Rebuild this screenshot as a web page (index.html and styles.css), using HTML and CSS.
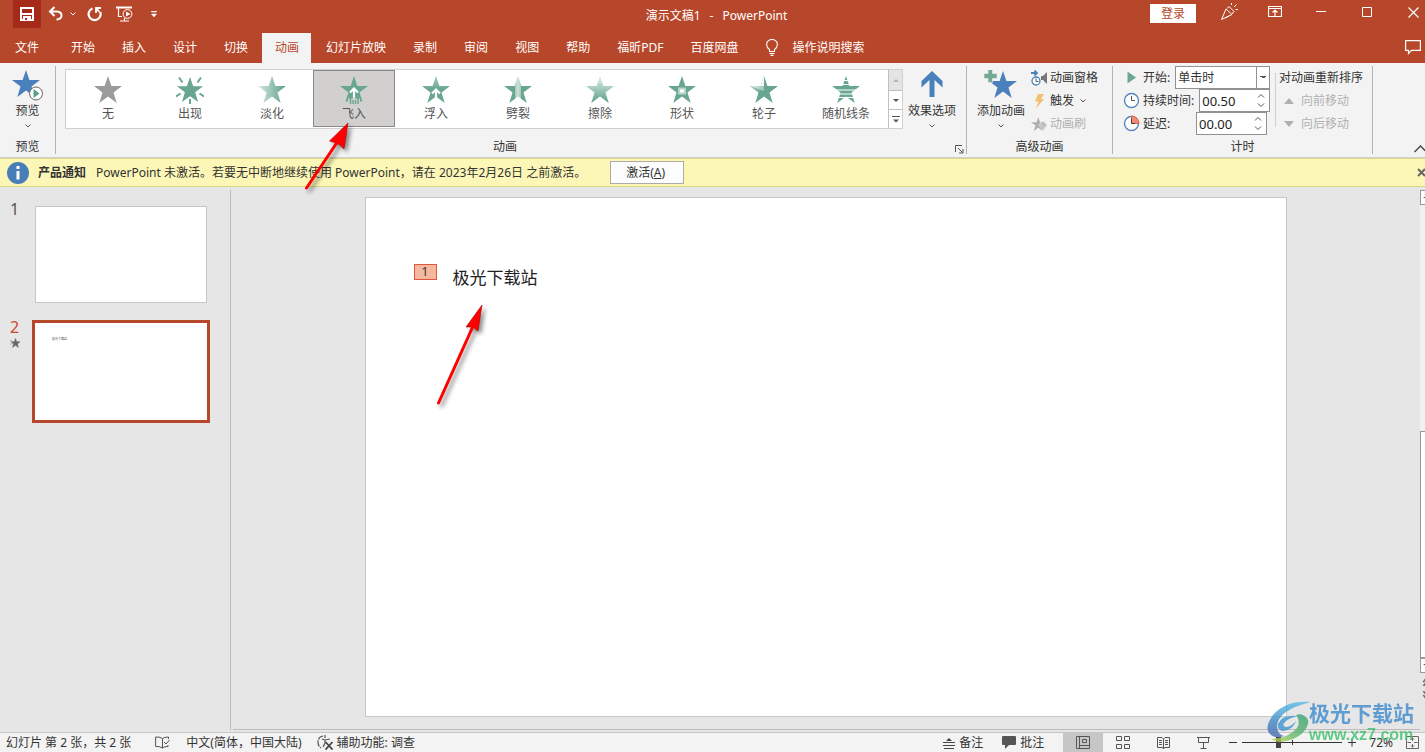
FILE: index.html
```html
<!DOCTYPE html>
<html lang="zh-CN">
<head>
<meta charset="utf-8">
<title>演示文稿1 - PowerPoint</title>
<link rel="stylesheet" href="styles.css">
</head>
<body>
<svg class="defs" width="0" height="0" aria-hidden="true">
  <defs>
    <path id="star" d="M14 0L17.4 10H28L19.5 16.5L22.7 27L14 20.6L5.3 27L8.5 16.5L0 10H10.6Z"/>
    <linearGradient id="fade-right"><stop offset="0" stop-color="#d5e8e0"/><stop offset="1" stop-color="#5c9f87"/></linearGradient>
    <linearGradient id="fade-down" x2="0" y2="1"><stop offset="0" stop-color="#e2f0ea"/><stop offset="1" stop-color="#5c9f87"/></linearGradient>
    <linearGradient id="float" x2="0" y2="1"><stop offset="0" stop-color="#a5cbbc"/><stop offset=".5" stop-color="#68a690"/></linearGradient>
    <linearGradient id="split"><stop offset=".38" stop-color="#68a690"/><stop offset=".38" stop-color="#9cc6b6"/><stop offset=".5" stop-color="#cbe2d9"/><stop offset=".62" stop-color="#9cc6b6"/><stop offset=".62" stop-color="#68a690"/></linearGradient>
    <linearGradient id="swirl-blue" x2="0" y2="1"><stop offset="0" stop-color="#54bdea"/><stop offset=".55" stop-color="#4189c6"/><stop offset="1" stop-color="#4a68b0"/></linearGradient>
    <linearGradient id="swirl-green" x1="1" y1="0" x2="0" y2="1"><stop offset="0" stop-color="#2f9f76"/><stop offset=".6" stop-color="#69b96b"/><stop offset="1" stop-color="#d6dc4e"/></linearGradient>
  </defs>
</svg>

<div class="app">
  <header class="header">
    <div class="titlebar">
      <div class="quick">
        <button class="save" aria-label="保存"><svg width="14" height="14" viewBox="0 0 14 14"><path fill="#fff" fill-rule="evenodd" d="M0 0H14V14H0ZM2 2V6H12V2ZM2 8V12H3V9H11V12H12V8ZM5 11V13H7V11Z"/></svg></button>
        <button class="undo" aria-label="撤消"><svg width="16" height="16" viewBox="0 0 16 16"><path d="M6.500 1L2 5.500L6.500 10M2 5.500H9Q13.500 6 13.500 9.500Q13.500 13 8.500 13.500" fill="none" stroke="#fff" stroke-width="2"/></svg></button>
        <button class="undo-more" aria-label="撤消列表"><svg width="6" height="4" viewBox="0 0 6 4"><path d="M.5 .5L3 3L5.500 .5" fill="none" stroke="#fff"/></svg></button>
        <button class="redo" aria-label="重复"><svg width="16" height="16" viewBox="0 0 16 16"><path d="M5.500 2.500A6 6 0 1 0 13.200 6" fill="none" stroke="#fff" stroke-width="2.200"/><path d="M9 7V2H14M9.500 2.500L12.500 6" fill="none" stroke="#fff" stroke-width="1.800"/></svg></button>
        <button class="play" aria-label="从头开始"><svg width="18" height="16" viewBox="0 0 18 16"><g fill="none" stroke="#fff"><path d="M0 1.500H16" stroke-width="2"/><path d="M2.500 2V10.500H6M4 15H13M8.500 12V15" stroke-width="1.200"/><circle cx="11.500" cy="8" r="4.400"/></g><path d="M10 5.500L14.500 8L10 10.500Z" fill="#fff"/></svg></button>
        <button class="quick-more" aria-label="自定义快速访问工具栏"><svg width="6" height="7" viewBox="0 0 6 7"><path d="M.5 0H5.500V1H.5ZM.5 3H5.500L3 6Z" fill="#fff" stroke="#fff" stroke-width=".5"/></svg></button>
      </div>
      <h1 class="title"><span>演示文稿1</span><span>-</span><span>PowerPoint</span></h1>
      <div class="window">
        <button class="signin">登录</button>
        <button class="cell" aria-label="即将推出的功能"><svg width="18" height="18" viewBox="0 0 18 18"><g fill="none" stroke="#fff"><path d="M1.500 16.500L6 6L12 11.500L1.500 16.500M7 5.500L9 3.500L14 8.500L12 11M9 13L5 15M11.500 2V0M14 4L16.500 1.500M15.500 6.500H18"/></g></svg></button>
        <button class="cell" aria-label="功能区显示选项"><svg width="14" height="12" viewBox="0 0 14 12"><path d="M.5 .5H13.500V10.500H.5ZM.5 2.500H13.500M7 10V5M4.500 6.500L7 4L9.500 6.500" fill="none" stroke="#fff" stroke-width="1.200"/></svg></button>
        <button class="cell" aria-label="最小化"><svg width="10" height="12"><path d="M0 5.500H10" stroke="#fff"/></svg></button>
        <button class="cell" aria-label="最大化"><svg width="10" height="10"><path d="M.5 .5H9.500V9.500H.5Z" fill="none" stroke="#fff"/></svg></button>
        <button class="cell" aria-label="关闭"><svg width="11" height="11"><path d="M.5 .5L10.500 10.500M10.500 .5L.5 10.500" stroke="#fff" stroke-width="1.200"/></svg></button>
      </div>
    </div>
    <nav class="tabs">
      <button class="tab file">文件</button>
      <button class="tab">开始</button>
      <button class="tab">插入</button>
      <button class="tab">设计</button>
      <button class="tab">切换</button>
      <button class="tab active">动画</button>
      <button class="tab">幻灯片放映</button>
      <button class="tab">录制</button>
      <button class="tab">审阅</button>
      <button class="tab">视图</button>
      <button class="tab">帮助</button>
      <button class="tab">福昕PDF</button>
      <button class="tab">百度网盘</button>
      <button class="tell"><svg width="12" height="17" viewBox="0 0 12 17"><path d="M3.500 12.500V10.500Q.6 8.500 .6 5.500A5.400 5 0 0 1 11.400 5.500Q11.400 8.500 8.500 10.500V12.500ZM3.500 14.500H8.500M4.500 16.400H7.500" fill="none" stroke="#fff" stroke-width="1.100"/></svg>操作说明搜索</button>
      <button class="comment" aria-label="批注"><svg width="16" height="15" viewBox="0 0 16 15"><path d="M.6 .6H15.400V10.400H6.500L3.500 13.500V10.400H.6Z" fill="none" stroke="#fff" stroke-width="1.200"/></svg></button>
    </nav>
  </header>

  <section class="ribbon" aria-label="动画">
    <div class="group preview">
      <div class="body">
        <button class="big"><svg width="32" height="32" viewBox="0 0 32 32"><use href="#star" fill="#4a80bc"/><circle cx="24" cy="23.500" r="6.500" fill="#fff" stroke="#666"/><path d="M21.500 19L27.500 23.500L21.500 28Z" fill="#5aa184"/></svg><span>预览</span><svg class="chev" width="6" height="4" viewBox="0 0 6 4"><path d="M.5 .5L3 3L5.500 .5" fill="none" stroke="#555"/></svg></button>
      </div>
      <div class="caption"><span>预览</span></div>
    </div>

    <div class="group animation">
      <div class="body">
        <div class="gallery">
          <button class="item"><svg width="28" height="28"><use href="#star" fill="#9b9b9b"/></svg>无</button>
          <button class="item"><svg width="28" height="28"><use href="#star" fill="#68a690" transform="translate(1 1) scale(.93)"/><g fill="none" stroke="#68a690" stroke-width="2"><path d="M3 1.500L6.500 6.500M25 1.500L21.500 6.500M0 20.500L4.500 17.500M28 20.500L23.500 17.500M14 23V28"/></g></svg>出现</button>
          <button class="item"><svg width="28" height="28"><use href="#star" fill="url(#fade-right)"/></svg>淡化</button>
          <button class="item selected"><svg width="28" height="28"><path d="M14 0L17.400 10H28L19.500 16.500L22 24H6L8.500 16.500L0 10H10.600Z" fill="#68a690"/><path d="M14 22.500V12.500M10 16.500L14 12.500L18 16.500" fill="none" stroke="#fff" stroke-width="2.200"/><path d="M5 22.500H12.500L14 21L15.500 22.500H23V25H5Z" fill="#d1d0ce"/><path d="M7 21.500L5.500 25.500H8V22M21 21.500L22.500 25.500H20V22" fill="#68a690"/><path d="M10.500 21V28M13 24V28M15.500 24V28M18 21V28" stroke="#68a690" stroke-width="1.400"/></svg>飞入</button>
          <button class="item"><svg width="28" height="28"><use href="#star" fill="url(#float)"/><path d="M14 21V13.500M10 17.500L14 13.500L18 17.500" fill="none" stroke="#fff" stroke-width="2.200"/></svg>浮入</button>
          <button class="item"><svg width="28" height="28"><use href="#star" fill="url(#split)"/></svg>劈裂</button>
          <button class="item"><svg width="28" height="28"><use href="#star" fill="url(#fade-down)"/></svg>擦除</button>
          <button class="item"><svg width="28" height="28"><use href="#star" fill="#68a690"/><path d="M11 12.500H17V17.500H11Z" fill="#fff" stroke="#b6d6ca" stroke-width="2"/></svg>形状</button>
          <button class="item"><svg width="28" height="28"><use href="#star" fill="#68a690"/><path d="M14 0V15L0 10H10.600Z" fill="#fff"/><path d="M14 15V10H0L7 15.500Z" fill="url(#fade-right)" opacity=".6"/></svg>轮子</button>
          <button class="item"><svg width="28" height="28"><use href="#star" fill="#68a690"/><path d="M0 4.500H28M0 8.500H28M0 14H28M0 18H28M0 21.500H28" stroke="#fff" stroke-width="1.200"/></svg>随机线条</button>
          <div class="pager">
            <button aria-label="上一行" disabled><svg width="6" height="3"><path d="M0 3L3 0L6 3Z" fill="#b5b5b5"/></svg></button>
            <button aria-label="下一行"><svg width="6" height="3"><path d="M0 0H6L3 3Z" fill="#555"/></svg></button>
            <button aria-label="其他"><svg width="8" height="7"><path d="M0 .5H8" stroke="#555"/><path d="M1 3.500H7L4 6.500Z" fill="#555"/></svg></button>
          </div>
        </div>
        <button class="big effect"><svg width="24" height="32" viewBox="0 0 24 32"><path d="M12 1L22.500 11V17.500L14.500 10V27H9.500V10L1.500 17.500V11Z" fill="#4a80bc"/></svg><span>效果选项</span><svg class="chev" width="6" height="4" viewBox="0 0 6 4"><path d="M.5 .5L3 3L5.500 .5" fill="none" stroke="#555"/></svg></button>
      </div>
      <div class="caption"><span>动画</span><button class="launcher" aria-label="动画选项"><svg width="9" height="9" viewBox="0 0 9 9"><path d="M.5 7V.5H7M3 3L7.500 7.500M8 4V8H4" fill="none" stroke="#555"/></svg></button></div>
    </div>

    <div class="group advanced">
      <div class="body">
        <button class="big"><svg width="34" height="32" viewBox="0 0 34 32"><use href="#star" fill="#4a80bc" transform="translate(5 1)"/><path d="M4 -.5H8.500V3.500H13V8.500H8.500V12.500H4V8.500H0V3.500H4Z" fill="#72aa94" stroke="#f3f3f3" stroke-width=".6"/></svg><span>添加动画</span><svg class="chev" width="6" height="4" viewBox="0 0 6 4"><path d="M.5 .5L3 3L5.500 .5" fill="none" stroke="#555"/></svg></button>
        <div class="rows">
          <button class="row"><svg width="17" height="16" viewBox="0 0 17 16"><path d="M0 3H6M3.500 .5L6 3L3.500 5.500" fill="none" stroke="#4a80bc" stroke-width="1.800"/><circle cx="5" cy="11" r="4" fill="#fff" stroke="#4a80bc" stroke-width="1.300"/><path d="M5 8.500V11.500H7.500" fill="none" stroke="#555"/><path d="M10 6H12L16 2V14L12 10H10Z" fill="#777"/></svg>动画窗格</button>
          <button class="row"><svg width="17" height="16" viewBox="0 0 17 16"><path d="M7 1H13L10 6H13L5 15.500L7.500 8.500H4Z" fill="#f0c071"/></svg>触发<svg class="more" width="6" height="4" viewBox="0 0 6 4"><path d="M.5 .5L3 3L5.500 .5" fill="none" stroke="#555"/></svg></button>
          <button class="row" disabled><svg width="17" height="16" viewBox="0 0 17 16"><use href="#star" fill="#b0b0b0" transform="translate(0 1) scale(.52)"/><path d="M8 9L12 5L16 9L12 14.500ZM9 8L14 12" fill="#bbb" stroke="#e6e6e6" stroke-width=".7"/></svg>动画刷</button>
        </div>
      </div>
      <div class="caption"><span>高级动画</span></div>
    </div>

    <div class="group timing">
      <div class="body">
        <div class="fields">
          <div class="field"><svg width="17" height="17" viewBox="0 0 17 17"><path d="M4.500 2.500L13 8.500L4.500 14.500Z" fill="#6ca790"/></svg><label for="start">开始:</label><select id="start"><option>单击时</option><option>与上一动画同时</option></select></div>
          <div class="field"><svg width="17" height="17" viewBox="0 0 17 17"><circle cx="8.500" cy="8.500" r="7" fill="#fff" stroke="#5285bd" stroke-width="1.400"/><path d="M8.500 4V8.500H12" fill="none" stroke="#555"/></svg><label for="duration">持续时间:</label><span class="spin"><input id="duration" type="text" value="00.50"><span class="arrows"><button aria-label="增加持续时间"><svg width="8" height="5"><path d="M1 4.500L4 1.500L7 4.500" fill="none" stroke="#555"/></svg></button><button aria-label="减少持续时间"><svg width="8" height="5"><path d="M1 .5L4 3.500L7 .5" fill="none" stroke="#555"/></svg></button></span></span></div>
          <div class="field"><svg width="17" height="17" viewBox="0 0 17 17"><circle cx="8.500" cy="8.500" r="7" fill="#fff" stroke="#5285bd" stroke-width="1.400"/><path d="M8.500 8.500V1A7.500 7.500 0 0 1 16 8.500Z" fill="#ee8b71" stroke="#e0644a"/><path d="M8.500 3.500V8.500H12" fill="none" stroke="#444"/></svg><label class="wide" for="delay">延迟:</label><span class="spin"><input id="delay" type="text" value="00.00"><span class="arrows"><button aria-label="增加延迟"><svg width="8" height="5"><path d="M1 4.500L4 1.500L7 4.500" fill="none" stroke="#555"/></svg></button><button aria-label="减少延迟"><svg width="8" height="5"><path d="M1 .5L4 3.500L7 .5" fill="none" stroke="#555"/></svg></button></span></span></div>
        </div>
        <div class="reorder">
          <div class="row">对动画重新排序</div>
          <button class="row" disabled><svg width="10" height="6"><path d="M0 6L5 0L10 6Z" fill="#b0b0b0"/></svg>向前移动</button>
          <button class="row" disabled><svg width="10" height="6"><path d="M0 0H10L5 6Z" fill="#b0b0b0"/></svg>向后移动</button>
        </div>
      </div>
      <div class="caption"><span>计时</span></div>
    </div>
    <button class="collapse" aria-label="折叠功能区"><svg width="13" height="8"><path d="M.5 7L6.500 1L12.500 7" fill="none" stroke="#444" stroke-width="1.300"/></svg></button>
  </section>

  <div class="notice">
    <svg width="22" height="22" viewBox="0 0 22 22"><circle cx="11" cy="11" r="11" fill="#477eb8"/><path d="M11 4V7M11 9V17.500" stroke="#fff" stroke-width="3"/></svg>
    <strong>产品通知</strong>
    <p>PowerPoint 未激活。若要无中断地继续使用 PowerPoint，请在 2023年2月26日 之前激活。</p>
    <button class="activate">激活(<u>A</u>)</button>
    <button class="dismiss" aria-label="关闭通知"><svg width="9" height="9"><path d="M1 1L8 8M8 1L1 8" stroke="#666" stroke-width="2"/></svg></button>
  </div>

  <main class="work">
    <aside class="thumbs">
      <div class="thumb-row"><div class="index">1</div><div class="thumb"></div></div>
      <div class="thumb-row"><div class="index current">2<svg width="10" height="10" viewBox="0 0 10 10"><path d="M5.500 .5L6.700 3.800H10L7.400 5.900L8.400 9.500L5.500 7.300L2.600 9.500L3.600 5.900L1 3.800H4.300ZM0 2.500H1.500M0 6H1.500" fill="#666" stroke="#666" stroke-width=".5"/></svg></div><div class="thumb chosen"><span>极光下载站</span></div></div>
    </aside>
    <div class="canvas">
      <div class="slide">
        <span class="order">1</span>
        <p class="text">极光下载站</p>
      </div>
    </div>
    <div class="scroll">
      <button class="scroll-up" aria-label="向上滚动"><svg width="5" height="3"><path d="M2 2L5 0V2Z" fill="#444"/></svg></button>
      <div class="scroll-thumb"></div>
      <button class="scroll-down" aria-label="向下滚动"><svg width="5" height="3"><path d="M2 0H5V2Z" fill="#444"/></svg></button>
      <button class="page" aria-label="上一张幻灯片"><svg width="5" height="8"><path d="M3 4L5 1V3L4 4ZM3 8L5 5V8Z" fill="#777" stroke="#777"/></svg></button>
      <button class="page" aria-label="下一张幻灯片"><svg width="5" height="8"><path d="M3 0L5 3V1ZM3 4L5 7V5Z" fill="#777" stroke="#777"/></svg></button>
    </div>
  </main>

  <footer class="status">
    <span class="count">幻灯片 第 2 张，共 2 张</span>
    <button class="proof" aria-label="校对"><svg width="15" height="13" viewBox="0 0 15 13"><path d="M7.500 2.500V12M7.500 2.500Q4 .5 .6 1V10.500Q4 10 7.500 12Q9 10.500 13 10.500V9M7.500 2.500Q9 1 13.500 1V3M9 6L11 8L14.500 4" fill="none" stroke="#555"/></svg></button>
    <button class="lang">中文(简体，中国大陆)</button>
    <button class="access"><svg width="17" height="15" viewBox="0 0 17 15"><path d="M6 1Q1 2 1 7Q1 11 4 13" fill="none" stroke="#555" stroke-width="1.200" stroke-dasharray="6 1"/><path d="M8 0V3M5 4L8 5L13 4M8 5V8L6 12" fill="none" stroke="#555" stroke-width="1.200"/><path d="M8.500 7L15.500 14.500M15.500 7L8.500 14.500" stroke="#444" stroke-width="1.800"/></svg>辅助功能: 调查</button>
    <div class="tools">
      <button class="notes"><svg width="12" height="12" viewBox="0 0 12 12"><path d="M3 4H9L6 1Z" fill="#444"/><path d="M0 5.500H12M0 8.500H12M1 11.500H11" stroke="#444"/></svg>备注</button>
      <button class="notes"><svg width="14" height="13" viewBox="0 0 14 13"><path d="M1 0H13Q14 0 14 1V8Q14 9 13 9H7L3 13V9H1Q0 9 0 8V1Q0 0 1 0Z" fill="#555"/></svg>批注</button>
      <div class="views">
        <button class="on" aria-label="普通视图"><svg width="14" height="13"><path d="M.5 .5H13.500V12.500H.5ZM3.500 .5V12.500M3.500 9.500H13.500M6.500 3.500H10.500V6.500H6.500Z" fill="none" stroke="#555"/></svg></button>
        <button aria-label="幻灯片浏览"><svg width="14" height="13"><path d="M.5 .5H5.500V4.500H.5ZM8.500 .5H13.500V4.500H8.500ZM.5 8.500H5.500V12.500H.5ZM8.500 8.500H13.500V12.500H8.500Z" fill="none" stroke="#555"/></svg></button>
        <button aria-label="阅读视图"><svg width="13" height="12"><path d="M6.500 2V12M.5 .5H5L6.500 2L8 .5H12.500V10.500H8L6.500 11.500L5 10.500H.5ZM2 3.500H5M2 5.500H5M2 7.500H5M8 3.500H11M8 5.500H11M8 7.500H11" fill="none" stroke="#555"/></svg></button>
        <button aria-label="幻灯片放映"><svg width="13" height="12"><path d="M0 .5H13M1.500 .5V5.500H11.500V.5M6.500 5.500V11M3.500 11.500H9.500" fill="none" stroke="#555"/></svg></button>
      </div>
      <button class="zoom-step" aria-label="缩小"><svg width="8" height="9"><path d="M0 4.500H8" stroke="#333"/></svg></button>
      <input class="zoom" type="range" min="10" max="190" value="73" aria-label="缩放">
      <button class="zoom-step" aria-label="放大"><svg width="8" height="9"><path d="M0 4.500H8M4 .5V8.500" stroke="#333"/></svg></button>
      <button class="percent">72%</button>
      <button class="fit" aria-label="按窗口大小调整"><svg width="13" height="13"><path d="M.5 .5H12.500V12.500H.5ZM6.500 1.500V5M6.500 8V11.500M1.500 6.500H5M8 6.500H11.500M5 3.500L6.500 2L8 3.500M5 9.500L6.500 11L8 9.500" fill="none" stroke="#666"/></svg></button>
    </div>
  </footer>

  <svg class="pointer to-gallery" width="62" height="86" viewBox="0 0 62 86" aria-hidden="true"><path d="M38 26L31.500 24L50 6L46 32L42 28Z" fill="#f00" stroke="#a00" stroke-width=".6"/><path d="M8.500 71L40 24" stroke="#f00" stroke-width="3" stroke-linecap="round"/></svg>
  <svg class="pointer to-text" width="66" height="116" viewBox="0 0 66 116" aria-hidden="true"><path d="M36 28L52 6L48 32L43 28Z" fill="#f00" stroke="#a00" stroke-width=".6"/><path d="M8.500 104L44 25" stroke="#f00" stroke-width="3" stroke-linecap="round"/></svg>

  <div class="mark">
    <svg width="46" height="42" viewBox="0 0 46 42" aria-hidden="true"><path d="M44 1Q19 -1 6 14Q-4 28 4 34Q9 38 17 35Q10 33 10 25Q11 9 44 1Z" fill="url(#swirl-blue)"/><path d="M33 13Q43 16 41 23Q36 38 14 41Q8 41 4 38Q22 37 30 27Q34 20 29 14Z" fill="url(#swirl-green)"/><path d="M31 15Q15 13 11 23Q10 29 16 30Q26 29 29 20Q25 25 20 26Q15 26 17 22Q21 17 31 15Z" fill="#3d95d2"/></svg>
    <div class="mark-text"><b>极光下载站</b><span>www.xz7.com</span></div>
  </div>
</div>
</body>
</html>
```
FILE: styles.css
```css
* { box-sizing: border-box; }

body {
  margin: 0;
  color: #333;
  font: 12px/18px "Noto Sans", "Noto Sans CJK SC", sans-serif;
}

button, input, select {
  margin: 0;
  padding: 0;
  border: 0;
  border-radius: 0;
  background: none;
  color: inherit;
  font: inherit;
  white-space: nowrap;
}

svg { display: block; flex: none; }
.defs { position: absolute; }

.app {
  position: relative;
  display: flex;
  flex-direction: column;
  height: 100vh;
  overflow: hidden;
  background: #e6e6e6;
}

/* Title bar and tabs */
.header { background: #b7472a; color: #fff; overflow: hidden; }
.titlebar { display: grid; grid-template-columns: 1fr auto 1fr; height: 33px; }
.quick { display: flex; align-items: center; height: 28px; padding-left: 13px; }
.save { display: grid; place-items: center; width: 28px; height: 28px; background: #a52a1a; }
.undo { margin-left: 7px; }
.undo-more { margin-left: 6px; }
.redo { margin-left: 11px; }
.play { margin-left: 13px; }
.quick-more { margin-left: 17px; }
.title { display: flex; gap: 9px; margin: 0; padding: 7px 0 0 8px; font: inherit; }
.window { display: flex; justify-content: flex-end; height: 24px; margin-right: -11px; }
.signin { width: 46px; height: 19px; margin: 4px 10px 0 0; background: #fff; color: #b7472a; }
.cell { display: grid; place-items: center; width: 46px; }

.tabs { display: flex; align-items: stretch; height: 30px; gap: 2px; }
.tab { padding: 0 12px 0 13px; }
.tab.file { width: 54px; padding: 0; margin-right: 2px; }
.tab.active { background: #f3f3f3; color: #b7472a; }
.tell { display: flex; align-items: center; gap: 14px; margin-left: 14px; padding-bottom: 1px; }
.comment { margin: 0 4px 1px auto; }

/* Ribbon */
.ribbon {
  position: relative;
  display: flex;
  flex: none;
  height: 95px;
  padding: 3px 0;
  border-bottom: 1px solid #d2d0ce;
  background: #f3f3f3;
  overflow: hidden;
}
.group { display: flex; flex-direction: column; justify-content: space-between; border-right: 1px solid #b5b5b5; }
.body { display: flex; align-items: flex-start; }
.caption { display: flex; align-items: center; height: 14px; text-align: center; }
.caption span { flex: 1; }
.big { display: flex; flex-direction: column; align-items: center; padding-top: 4px; }
.chev { margin-top: 4px; }
.preview .body { justify-content: center; }
.preview { width: 56px; }
.animation { padding-left: 9px; }
.animation .caption { padding-right: 2px; }
.animation .caption span { padding-right: 10px; }
.gallery { display: flex; height: 60px; margin-top: 3px; padding-left: 1px; border: 1px solid #d0d0d0; background: #fff; }
.item { display: flex; flex-direction: column; align-items: center; width: 82px; height: 57px; padding-top: 5px; border: 1px solid transparent; color: #555; }
.item.selected { border-color: #8a8886; background: #d1d0ce; }
.item svg { margin-bottom: 1px; }
.pager { display: grid; grid-template-rows: 20px 1fr 1fr; width: 14px; margin-left: 1px; border-left: 1px solid #c0c0c0; }
.pager button { display: grid; place-items: center; }
.pager button + button { border-top: 1px solid #c0c0c0; }
.pager button:disabled { background: #e4e4e4; }
.effect { margin: 0 10px 0 5px; }
.launcher { width: 9px; margin-top: 4px; }

.advanced { width: 146px; }
.advanced .body { gap: 6px; padding-left: 10px; }
.row { display: flex; align-items: center; gap: 2px; height: 23px; }
.row:disabled { color: #b1b1b1; }
.more { margin-left: 4px; }

.timing { width: 260px; }
.fields { padding-left: 10px; }
.field { display: flex; align-items: center; height: 23px; }
.field label { margin: 0 5px 0 3px; }
.field .wide { width: 48px; }
.field select {
  width: 95px;
  height: 23px;
  padding: 0 2px;
  border: 1px solid #919191;
  appearance: none;
  background:
    linear-gradient(#919191, #919191) right 12px top 0 / 1px 100% no-repeat,
    conic-gradient(from -45deg at 50% 100%, transparent 0) right 3px center / 6px 3px no-repeat,
    linear-gradient(to bottom left, #555 50%, transparent 50%) right 6px center / 3px 3px no-repeat,
    linear-gradient(to bottom right, #555 50%, transparent 50%) right 3px center / 3px 3px no-repeat,
    #fff;
}
.spin { display: flex; width: 71px; height: 23px; border: 1px solid #919191; background: #fff; }
.spin input { flex: 1; min-width: 0; padding-left: 2px; color: #222; font-size: 13px; }
.arrows { display: grid; width: 16px; }
.arrows button { display: grid; place-items: center; }
.reorder { display: flex; flex-direction: column; margin-left: auto; padding: 0 9px 0 4px; background: linear-gradient(#d0d0d0, #d0d0d0) left 7px / 1px 54px no-repeat; }
.reorder .row + .row { gap: 7px; padding-left: 5px; }
.collapse { position: absolute; right: -2px; bottom: 4px; }

/* Activation notice */
.notice {
  display: flex;
  flex: none;
  align-items: center;
  height: 29px;
  padding-left: 7px;
  border: solid #d9d58a;
  border-width: 1px 0;
  background: #fcf7b6;
  overflow: hidden;
}
.notice strong { margin: 0 10px 0 9px; }
.notice p { margin: 0; white-space: nowrap; }
.activate { width: 74px; height: 23px; margin-left: 24px; padding-right: 3px; border: 1px solid #ababab; background: #fdfdfd; }
.dismiss { margin: 0 -1px 0 auto; }

/* Workspace */
.work { display: flex; flex: 1; min-height: 0; padding: 3px 0 2px; }
.thumbs { width: 231px; flex: none; padding-top: 16px; border-right: 1px solid #bcbcbc; }
.thumb-row { display: flex; align-items: flex-start; }
.index { width: 25px; margin-right: 7px; padding-left: 10px; color: #555; font-size: 16px; line-height: 14px; }
.thumb-row:first-child .index { margin-top: -4px; }
.index svg { margin-top: 4px; }
.index.current { color: #d24726; }
.thumb { width: 178px; aspect-ratio: 178 / 103; margin-bottom: 14px; border: 1px solid #c6c6c6; background: #fff; }
.thumb-row:first-child .thumb { width: 172px; aspect-ratio: 172 / 97; margin: 0 3px 17px; }
.thumb.chosen { padding: 12px 17px; border: 3px solid #b7472a; color: #555; font-size: 3px; line-height: 9px; }
.thumb span { display: block; }
.canvas {
  display: flex;
  flex: 1;
  justify-content: center;
  min-width: 0;
  margin-left: 2px;
  padding: 7px 2px 12px 0;
  border-bottom: 1px solid #bcbcbc;
}
.slide { position: relative; height: 100%; aspect-ratio: 922 / 520; border: 1px solid #c6c6c6; background: #fff; }
.order { position: absolute; left: 48px; top: 66px; width: 23px; height: 16px; border: 1px solid #e0583a; background: #f5b79e; line-height: 14px; text-align: center; }
.text { margin: 0; padding: 68px 0 0 87px; color: #222; font-size: 17px; line-height: 24px; }
.scroll { display: flex; flex-direction: column; width: 5px; overflow: hidden; background: #f0f0f0; }
.scroll button { display: grid; place-items: center start; flex: none; height: 15px; border: solid #999; border-width: 1px 0 1px 1px; background: #fff; }
.scroll-thumb { height: 227px; margin-top: auto; border: 1px solid #999; border-right: 0; background: #fff; }
.scroll .page { height: 18px; border: 0; background: #e6e6e6; }
.scroll .page:last-child { height: 39px; place-items: start; }

/* Status bar */
.status { display: flex; flex: none; align-items: center; height: 20px; padding-left: 6px; border-top: 1px solid #c6c6c6; background: #f3f3f3; }
.proof { margin: 0 16px 0 24px; }
.access { display: flex; align-items: center; gap: 3px; margin-left: 15px; }
.tools { display: flex; align-items: center; height: 100%; margin-left: auto; padding-right: 6px; }
.notes { display: flex; align-items: center; gap: 4px; margin-right: 19px; }
.views { display: flex; height: 100%; }
.views button { display: grid; place-items: center; width: 40px; }
.views .on { background: #c6c6c6; }
.zoom-step { margin-left: 6px; }
.zoom {
  width: 100px;
  height: 15px;
  margin-left: 5px;
  appearance: none;
  background:
    linear-gradient(#333, #333) center / 100% 1px no-repeat,
    linear-gradient(#333, #333) center / 1px 5px no-repeat;
}
.zoom::-webkit-slider-thumb { width: 5px; height: 11px; appearance: none; background: #444; }
.percent { margin: 0 13px; }

/* Callouts and watermark lie over the window */
.pointer { position: absolute; filter: drop-shadow(3px 3px 2px rgba(0, 0, 0, .45)); }
.to-gallery { left: 298px; top: 117px; }
.to-text { left: 430px; top: 299px; }
.mark { position: absolute; right: 11px; bottom: 8px; display: flex; opacity: .8; pointer-events: none; }
.mark-text { display: flex; flex-direction: column; margin-left: -4px; }
.mark-text b { color: #3d8ace; font-size: 21px; line-height: 25px; }
.mark-text span { color: #3fc16d; font: bold 16px/18px "Liberation Sans", sans-serif; }
```
